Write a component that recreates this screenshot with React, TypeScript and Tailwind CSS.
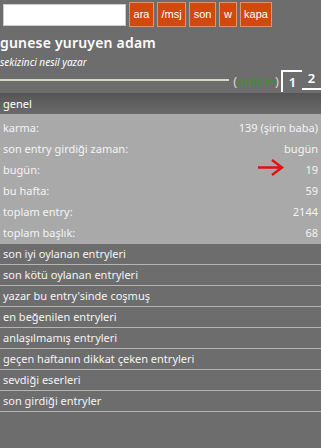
import React from "react";

const stats = [
  ["karma:", "139 (şirin baba)"],
  ["son entry girdiği zaman:", "bugün"],
  ["bugün:", "19"],
  ["bu hafta:", "59"],
  ["toplam entry:", "2144"],
  ["toplam başlık:", "68"],
];

const links = [
  "son iyi oylanan entryleri",
  "son kötü oylanan entryleri",
  "yazar bu entry'sinde coşmuş",
  "en beğenilen entryleri",
  "anlaşılmamış entryleri",
  "geçen haftanın dikkat çeken entryleri",
  "sevdiği eserleri",
  "son girdiği entryler",
];

const buttons = [
  { t: "ara", w: "w-[25px]" },
  { t: "/msj", w: "w-[29px]" },
  { t: "son", w: "w-[27px]" },
  { t: "w", w: "w-[18px]" },
  { t: "kapa", w: "w-[32px]" },
];

export default function App() {
  return (
    <div className="w-[321px] h-[448px] bg-[#6d6d6d] text-white font-['Noto_Sans',sans-serif] overflow-hidden">
      {/* search bar */}
      <div className="flex items-center pl-[3px] pt-[2px] h-[27px]">
        <input className="w-[123px] h-[22px] bg-white border border-[#ccc] mr-[3px]" />
        <div className="flex gap-[3px]">
          {buttons.map((b) => (
            <button
              key={b.t}
              className={`${b.w} h-[25px] bg-[#d2490c] border border-[#e8906a] text-[11px] font-['Liberation_Sans',sans-serif] text-white`}
            >
              {b.t}
            </button>
          ))}
        </div>
      </div>

      {/* nick */}
      <div className="mt-[7px] text-[14px] font-semibold leading-[18px] tracking-[0.2px]">gunese yuruyen adam</div>
      <div className="mt-[4px] text-[10px] italic leading-[12px]">sekizinci nesil yazar</div>

      {/* tabs */}
      <div className="flex items-end h-[25px] mt-[-1px]">
        <div className="flex-1 h-[2px] bg-[#d9d9c8] mb-[11px]" />
        <span className="ml-[4px] mb-[3px] text-[13px] leading-[16px] text-[#d8d8c8]">
          (<span className="text-[#3f8f34]">online</span>)
        </span>
        <div className="ml-[2px] w-[21px] h-[22px] border-l-2 border-t-2 border-white text-[13px] font-semibold leading-[20px] text-center">
          1
        </div>
        <div className="w-[19px] h-[19px] border-b-2 border-white text-[13px] font-semibold leading-[15px] text-center mb-[2px]">
          2
        </div>
      </div>

      {/* genel */}
      <div className="h-[21px] mt-[1px] bg-gradient-to-b from-[#555] to-[#6a6a6a] text-[11px] leading-[21px] pl-[3px]">
        genel
      </div>

      {/* stats */}
      <div className="bg-[#a9a9a9] pt-[3px] pb-[1px]">
        {stats.map(([k, v]) => (
          <div key={k} className="relative flex justify-between px-[3px] h-[21px] text-[11px] leading-[21px] text-[#f4f4f4]">
            <span>{k}</span>
            <span>{v}</span>
            {k === "bugün:" && (
              <svg className="absolute left-[257px] top-[0px]" width="27" height="17" viewBox="0 0 27 17">
                <path d="M1 8.5 H24 M15 1 L25 8.5 L15 16" stroke="#e01212" strokeWidth="2.5" fill="none" />
              </svg>
            )}
          </div>
        ))}
      </div>

      {/* links */}
      <div>
        {links.map((l) => (
          <div key={l} className="h-[21px] border-b border-[#b4b4b4] text-[11px] leading-[20px] pl-[3px] text-[#f4f4f4]">
            {l}
          </div>
        ))}
      </div>
    </div>
  );
}
